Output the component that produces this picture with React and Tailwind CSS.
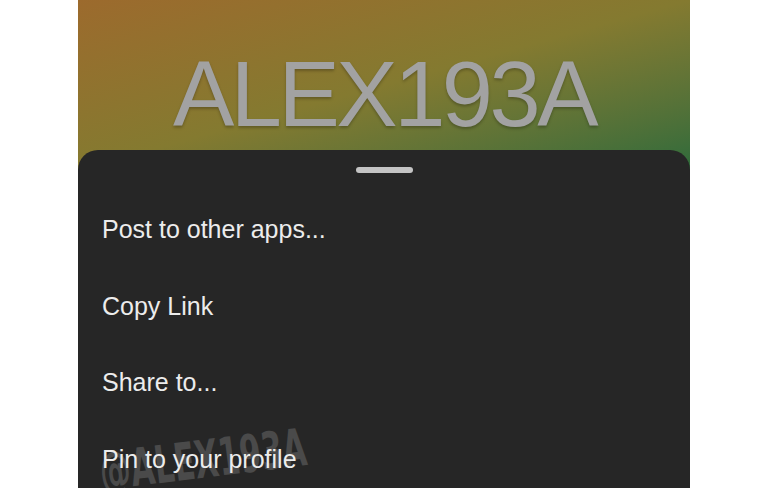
import React from 'react';

const items = ['Post to other apps...', 'Copy Link', 'Share to...', 'Pin to your profile'];

const App = () => {
  return (
    <div className="w-[768px] h-[488px] bg-white flex justify-center overflow-hidden" style={{ fontFamily: '"Liberation Sans", Arial, sans-serif' }}>
      <div className="w-[612px] h-full flex flex-col">
        {/* profile header */}
        <div className="h-[170px] shrink-0 bg-linear-to-br from-[#9c6a2d] via-[#847a30] to-[#2d6b3b] flex justify-center">
          <div className="pt-[48px] text-[92px] leading-none tracking-[-3.5px] text-[#a2a2a2] [text-shadow:0_2px_3px_rgba(0,0,0,0.25)]">
            ALEX193A
          </div>
        </div>

        {/* share sheet */}
        <div className="relative -mt-[20px] flex-1 bg-[#262626] rounded-t-[20px] overflow-hidden">
          <div className="flex justify-center pt-[17px]">
            <div className="w-[57px] h-[6px] rounded-full bg-[#c4c4c4]" />
          </div>

          <div
            className="absolute left-[25px] top-[296px] whitespace-nowrap text-[52px] leading-none font-bold text-[#4a4a4a] origin-bottom-left -rotate-[7deg] scale-x-[0.66]"
            style={{ fontFamily: '"DejaVu Sans Condensed", "DejaVu Sans", sans-serif' }}
          >
            @ALEX193A
          </div>

          <div className="relative mt-[18px] pl-[24px] flex flex-col">
            {items.map((item) => (
              <div key={item} className="text-[25px] leading-[76.5px] text-[#ececec]">
                {item}
              </div>
            ))}
          </div>
        </div>
      </div>
    </div>
  );
};

export default App;
